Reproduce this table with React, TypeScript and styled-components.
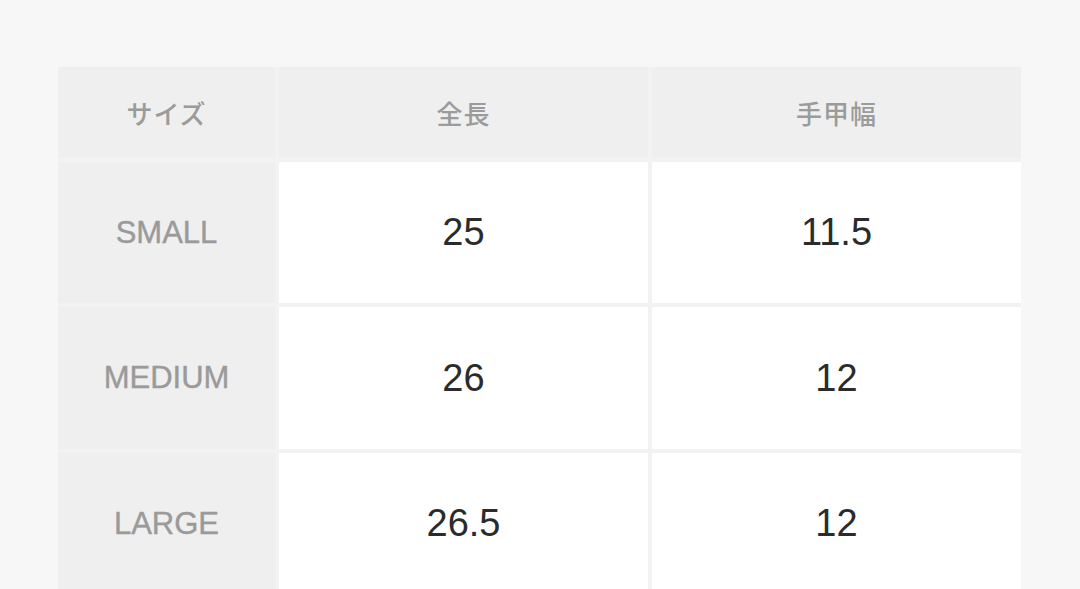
import { Fragment } from "react";
import styled, { createGlobalStyle } from "styled-components";

const GlobalStyle = createGlobalStyle`
  html, body {
    margin: 0;
    padding: 0;
    background: #f7f7f7;
  }
  body {
    font-family: "Noto Sans CJK JP", "Liberation Sans", sans-serif;
  }
`;

const Page = styled.div`
  padding: 67px 58px 0 58px;
  height: 589px;
  box-sizing: border-box;
  overflow: hidden;
`;

const SizeTable = styled.div`
  display: grid;
  grid-template-columns: 217px 369px 369px;
  grid-template-rows: 91px 141px 142px 141px;
  gap: 4px;
  background: #f2f2f2;
  width: 963px;
`;

const HeadCell = styled.div`
  background: #efefef;
  color: #9b9b9b;
  font-family: "Noto Sans CJK JP", sans-serif;
  font-weight: 500;
  font-size: 26px;
  letter-spacing: 1px;
  display: flex;
  align-items: center;
  justify-content: center;
`;

const LabelCell = styled.div`
  background: #efefef;
  color: #9a9a9a;
  font-family: "Liberation Sans", Arial, sans-serif;
  font-size: 31px;
  -webkit-text-stroke: 0.4px #9a9a9a;
  display: flex;
  align-items: center;
  justify-content: center;
`;

const ValueCell = styled.div`
  background: #ffffff;
  color: #2b2b2b;
  font-family: "Liberation Sans", Arial, sans-serif;
  font-size: 38px;
  display: flex;
  align-items: center;
  justify-content: center;
`;

interface ISize {
  name: string;
  length: string;
  width: string;
}

const sizes: ISize[] = [
  { name: "SMALL", length: "25", width: "11.5" },
  { name: "MEDIUM", length: "26", width: "12" },
  { name: "LARGE", length: "26.5", width: "12" },
];

function App() {
  return (
    <>
      <GlobalStyle />
      <Page>
        <SizeTable>
          <HeadCell>サイズ</HeadCell>
          <HeadCell>全長</HeadCell>
          <HeadCell>手甲幅</HeadCell>
          {sizes.map((size) => (
            <Fragment key={size.name}>
              <LabelCell>{size.name}</LabelCell>
              <ValueCell>{size.length}</ValueCell>
              <ValueCell>{size.width}</ValueCell>
            </Fragment>
          ))}
        </SizeTable>
      </Page>
    </>
  );
}

export default App;
